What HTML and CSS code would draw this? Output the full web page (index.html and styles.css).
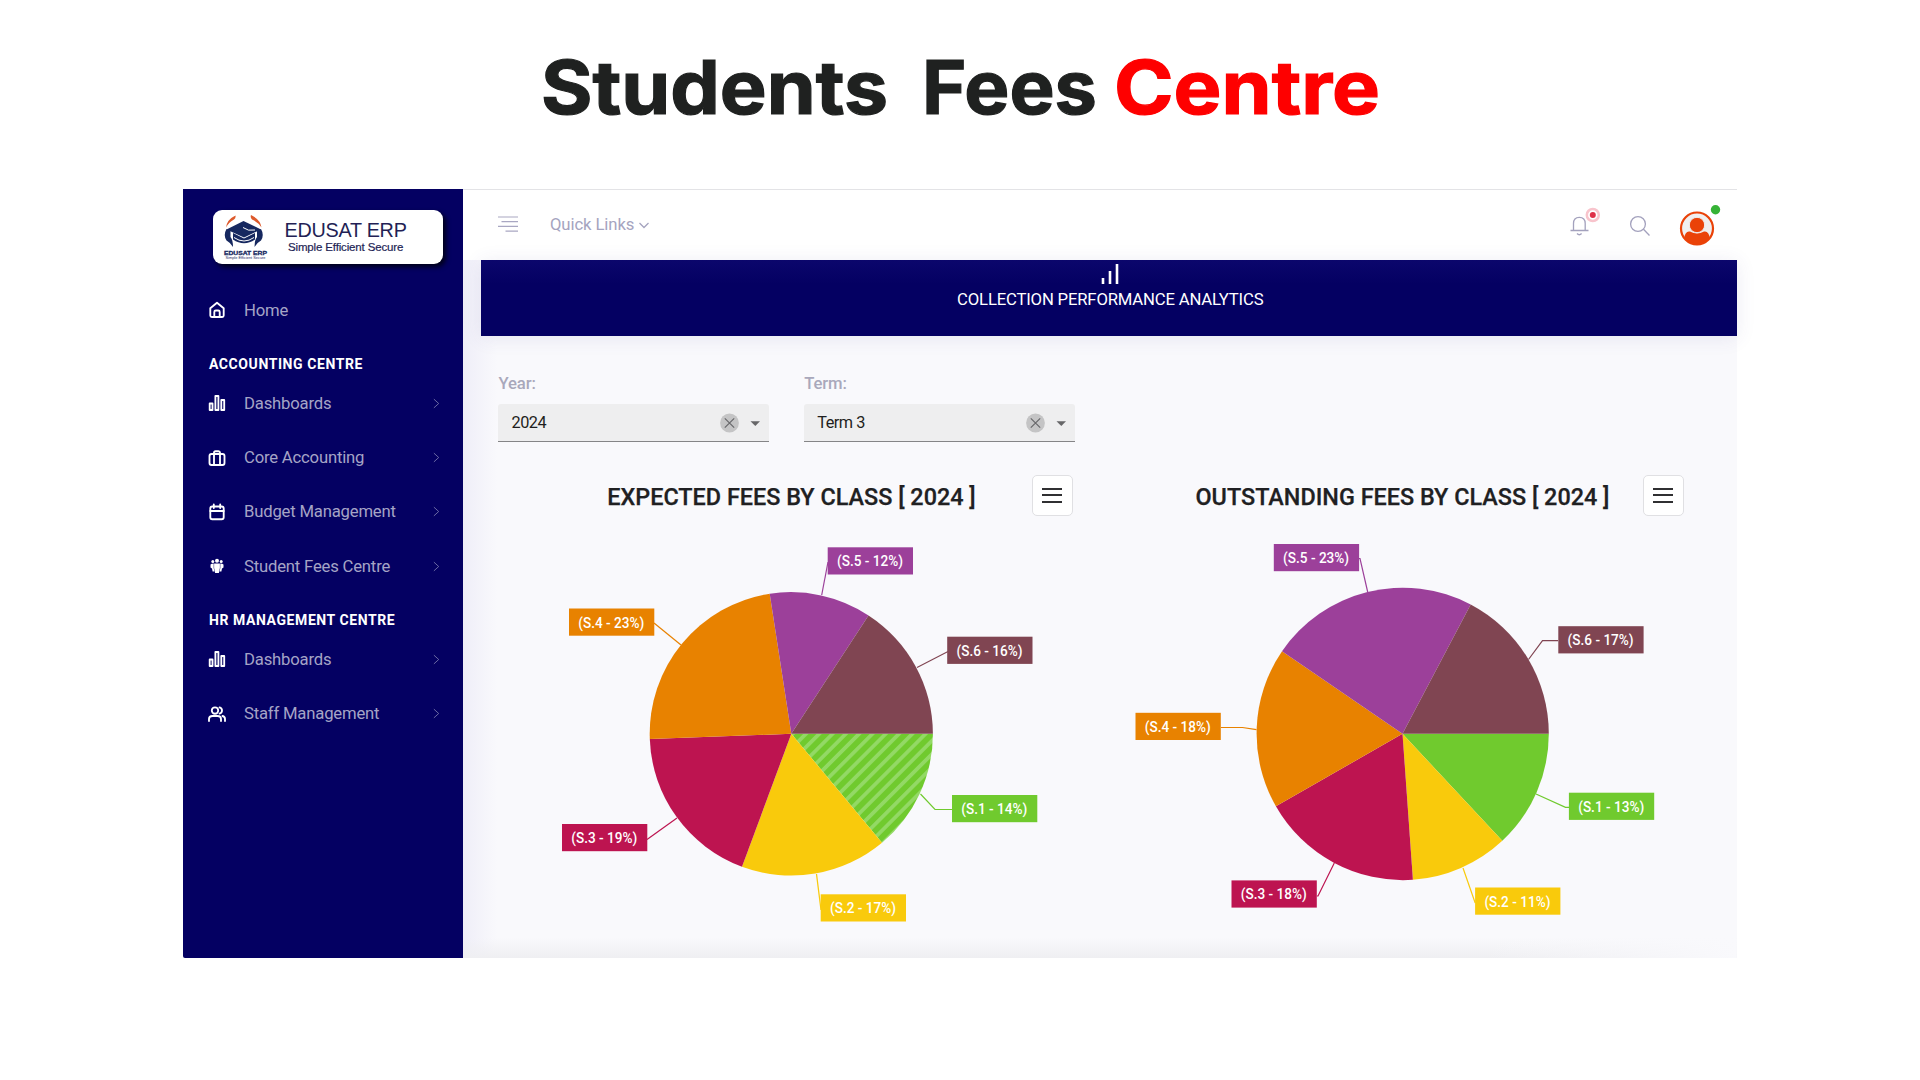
FILE: index.html
```html
<!DOCTYPE html>
<html lang="en">
<head>
<meta charset="utf-8">
<title>Students Fees Centre</title>
<link rel="stylesheet" href="styles.css">
</head>
<body>
<h1 class="headline"><svg width="1920" height="189" viewBox="0 0 1920 189">
  <text x="541" y="114" textLength="347" lengthAdjust="spacingAndGlyphs">Students</text>
  <text x="922" y="114" textLength="175" lengthAdjust="spacingAndGlyphs">Fees</text>
  <text class="red" x="1114" y="114" textLength="266" lengthAdjust="spacingAndGlyphs">Centre</text>
</svg></h1>

<div class="app">
  <aside class="sidebar">
    <div class="brand">
      <svg class="emblem" width="46" height="48" viewBox="0 0 46 48">
        <path d="M3 14.500Q4 6.500 12.500 2.500Q13 5 11 6.500Q6 9 3 14.500ZM38.500 14.500Q37.500 6.500 28 2Q27 4.500 29 6.500Q35 9 38.500 14.500Z" fill="#dd5a2c"/>
        <path d="M20.500 8L38 16.500L21 24.500L3.500 16.500Z" fill="#16285f"/>
        <path d="M10 20L21 25.500L32 20V26.500Q21 34 10 26.500Z" fill="#16285f"/>
        <path d="M20 14.500Q25 18.500 32 17" stroke="#fff" stroke-width="1" fill="none"/>
        <path d="M11 24.500Q21 31.500 31 24.500" stroke="#fff" stroke-width="1" fill="none"/>
        <path d="M3.500 16Q0 22 3.500 27.500Q8 30 10 34Q10 27 7.500 24V17.500ZM38 16Q41.500 22 38 27.500Q33.500 30 31.500 34Q31.500 27 34 24V17.500Z" fill="#16285f"/>
        <text x="1" y="42" class="em-name" textLength="43" lengthAdjust="spacingAndGlyphs">EDUSAT ERP</text>
        <text x="2.500" y="46" class="em-tag" textLength="40" lengthAdjust="spacingAndGlyphs">Simple Efficient Secure</text>
      </svg>
      <div class="brand-text">
        <div class="brand-name">EDUSAT ERP</div>
        <div class="brand-tag">Simple Efficient Secure</div>
      </div>
    </div>
    <nav class="nav">
      <a class="item"><svg class="ico" viewBox="0 0 18 18"><path d="M2.300 7.200L9 1.700L15.700 7.200V14.500Q15.700 16 14.200 16H3.800Q2.300 16 2.300 14.500ZM6.300 16V11Q6.300 9.500 7.800 9.500H10.200Q11.700 9.500 11.700 11V16"/></svg><span>Home</span></a>
      <div class="group">ACCOUNTING CENTRE</div>
      <a class="item"><svg class="ico" viewBox="0 0 18 18"><path d="M1.700 9.500H4.500V16H1.700ZM7.400 2H10.400V16H7.400ZM13.300 6H16.200V16H13.300Z"/></svg><span>Dashboards</span><svg class="chev" viewBox="0 0 8 12"><path d="M1 1L6.500 6L1 11"/></svg></a>
      <a class="item"><svg class="ico" viewBox="0 0 18 18"><rect x="1.500" y="5" width="15" height="11" rx="2"/><path d="M6 16V3.800Q6 2.200 7.500 2.200H10.500Q12 2.200 12 3.800V16"/></svg><span>Core Accounting</span><svg class="chev" viewBox="0 0 8 12"><path d="M1 1L6.500 6L1 11"/></svg></a>
      <a class="item"><svg class="ico" viewBox="0 0 18 18"><rect x="2.300" y="3.500" width="13.400" height="12.700" rx="2"/><path d="M2.300 8H15.700M5.800 1.500V5M12.200 1.500V5"/></svg><span>Budget Management</span><svg class="chev" viewBox="0 0 8 12"><path d="M1 1L6.500 6L1 11"/></svg></a>
      <a class="item"><svg class="ico solid" viewBox="0 0 18 18"><circle cx="9" cy="3.800" r="2"/><circle cx="4.800" cy="4.600" r="1.500"/><circle cx="13.200" cy="4.600" r="1.500"/><path d="M6.100 6.500H11.900V11L10.900 16H7.100L6.100 11ZM5.700 6.500V11L6.400 14.500H4.600L4 11.500L2.500 10.500V7.500Q3.500 6.500 5.700 6.500ZM12.300 6.500V11L11.600 14.500H13.400L14 11.500L15.500 10.500V7.500Q14.500 6.500 12.300 6.500Z"/></svg><span>Student Fees Centre</span><svg class="chev" viewBox="0 0 8 12"><path d="M1 1L6.500 6L1 11"/></svg></a>
      <div class="group">HR MANAGEMENT CENTRE</div>
      <a class="item"><svg class="ico" viewBox="0 0 18 18"><path d="M1.700 9.500H4.500V16H1.700ZM7.400 2H10.400V16H7.400ZM13.300 6H16.200V16H13.300Z"/></svg><span>Dashboards</span><svg class="chev" viewBox="0 0 8 12"><path d="M1 1L6.500 6L1 11"/></svg></a>
      <a class="item"><svg class="ico" viewBox="0 0 18 18"><circle cx="7" cy="5.500" r="3.200"/><path d="M1 16V14Q1 11 4.500 11H9.500Q13 11 13 14V16M11.500 2.400Q14 3 14 5.500Q14 8 11.500 8.600M14.500 11Q17 11.800 17 14V16"/></svg><span>Staff Management</span><svg class="chev" viewBox="0 0 8 12"><path d="M1 1L6.500 6L1 11"/></svg></a>
    </nav>
  </aside>

  <main class="main">
    <header class="topbar">
      <svg class="burger" width="20" height="16" viewBox="0 0 20 16"><path d="M0 1H20M3.500 5.700H20M0 10.400H20M7.500 15.200H20"/></svg>
      <span class="quick">Quick Links</span>
      <svg class="down" width="10" height="7" viewBox="0 0 10 7"><path d="M.5 1L5 5.500L9.500 1"/></svg>
      <svg class="tools" width="166" height="48" viewBox="1559 202 166 48">
        <g class="thin">
          <path d="M1573.500 231.500V224.500Q1573.500 218.300 1579.300 218.300Q1585.200 218.300 1585.200 224.500V231.500M1570.500 231.500H1588.500M1577 234.500Q1579.300 237 1581.600 234.500"/>
          <circle cx="1638" cy="225" r="7.400"/><path d="M1643.500 230.200L1649.500 236.500"/>
        </g>
        <circle cx="1592.800" cy="216" r="6" fill="#fff" stroke="#f8c4cc" stroke-width="2.500"/>
        <circle cx="1592.800" cy="216" r="3" fill="#de3149"/>
        <clipPath id="face"><circle cx="1697" cy="229.500" r="16"/></clipPath>
        <circle cx="1697" cy="229.500" r="16" fill="#f0efef"/>
        <path d="M1684 248V240Q1685 231.500 1690 232.500Q1697 236.500 1704 232.500Q1709 231.500 1710 240V248Z" fill="#ea4208" clip-path="url(#face)"/>
        <circle cx="1697" cy="226" r="7.700" fill="#ea4208" stroke="#f0efef" stroke-width="1"/>
        <circle cx="1697" cy="229.500" r="16" fill="none" stroke="#ea4208" stroke-width="2.200"/>
        <circle cx="1715.500" cy="210.700" r="4.700" fill="#36b336"/>
      </svg>
    </header>
    <div class="content">
      <div class="banner">
        <svg width="18" height="22" viewBox="0 0 18 22"><path d="M2 15V21M9 8V21M16 1V21"/></svg>
        <span>COLLECTION PERFORMANCE ANALYTICS</span>
      </div>
      <div class="filters">
        <div class="field">
          <label>Year:</label>
          <div class="select"><span>2024</span><svg width="32" height="20" viewBox="0 0 32 20"><circle cx="9.500" cy="10" r="9.400"/><path class="x" d="M4.800 5.300L14.200 14.700M14.200 5.300L4.800 14.700"/><path class="tri" d="M30.500 8.200H40L35.300 13Z"/></svg></div>
        </div>
        <div class="field">
          <label>Term:</label>
          <div class="select"><span>Term 3</span><svg width="32" height="20" viewBox="0 0 32 20"><circle cx="9.500" cy="10" r="9.400"/><path class="x" d="M4.800 5.300L14.200 14.700M14.200 5.300L4.800 14.700"/><path class="tri" d="M30.500 8.200H40L35.300 13Z"/></svg></div>
        </div>
      </div>
      <div class="charts">
        <section class="panel">
          <div class="panel-head"><h2>EXPECTED FEES BY CLASS [ 2024 ]</h2><button class="menu"><i></i><i></i><i></i></button></div>
          <svg class="pie" viewBox="486 530 611 428">
            <defs><pattern id="stripes" width="9.400" height="9.400" patternUnits="userSpaceOnUse" patternTransform="rotate(-45 791 734)"><rect width="9.400" height="9.400" fill="#70ca2e"/><rect width="9.400" height="3.700" fill="#93d965"/></pattern></defs>
            <path fill="url(#stripes)" d="M791.300 733.800H932.900A141.600 141.600 0 0 1 882 842.700Z"/>
            <path fill="#f9ca0c" d="M791.300 733.800L882 842.700A141.600 141.600 0 0 1 742 866.700Z"/>
            <path fill="#bd1450" d="M791.300 733.800L742 866.700A141.600 141.600 0 0 1 649.800 739Z"/>
            <path fill="#e88200" d="M791.300 733.800L649.800 739A141.600 141.600 0 0 1 769.700 593.700Z"/>
            <path fill="#9c409a" d="M791.300 733.800L769.700 593.700A141.600 141.600 0 0 1 868.500 615.400Z"/>
            <path fill="#804552" d="M791.300 733.800L868.500 615.400A141.600 141.600 0 0 1 932.900 733.800Z"/>
            <g class="lead">
              <path stroke="#9c409a" d="M821.700 595L828 562"/>
              <path stroke="#804552" d="M917 667.500L948 651.500"/>
              <path stroke="#70ca2e" d="M920.500 794L935 809.500H952"/>
              <path stroke="#f9ca0c" d="M816.500 874L821 910"/>
              <path stroke="#bd1450" d="M677 818L647 839.500"/>
              <path stroke="#e88200" d="M681 645L654 623"/>
            </g>
            <g class="tags">
              <rect x="827.700" y="547.300" width="85.300" height="27.200" fill="#9c409a"/><text x="837" y="566.300" textLength="66" lengthAdjust="spacingAndGlyphs">(S.5 - 12%)</text>
              <rect x="947.200" y="636.700" width="85.300" height="27.200" fill="#804552"/><text x="956.500" y="655.700" textLength="66" lengthAdjust="spacingAndGlyphs">(S.6 - 16%)</text>
              <rect x="952" y="795" width="85.300" height="27.200" fill="#70ca2e"/><text x="961.300" y="814" textLength="66" lengthAdjust="spacingAndGlyphs">(S.1 - 14%)</text>
              <rect x="820.700" y="894.300" width="85.300" height="27.200" fill="#f9ca0c"/><text x="830" y="913.300" textLength="66" lengthAdjust="spacingAndGlyphs">(S.2 - 17%)</text>
              <rect x="562" y="824" width="85.300" height="27.200" fill="#bd1450"/><text x="571.300" y="843" textLength="66" lengthAdjust="spacingAndGlyphs">(S.3 - 19%)</text>
              <rect x="569" y="608.500" width="85.300" height="27.200" fill="#e88200"/><text x="578.300" y="627.500" textLength="66" lengthAdjust="spacingAndGlyphs">(S.4 - 23%)</text>
            </g>
          </svg>
        </section>
        <section class="panel">
          <div class="panel-head"><h2>OUTSTANDING FEES BY CLASS [ 2024 ]</h2><button class="menu"><i></i><i></i><i></i></button></div>
          <svg class="pie" viewBox="1097 530 611 428">
            <path fill="#70ca2e" d="M1402.500 733.800H1548.800A146.300 146.300 0 0 1 1502.300 840.800Z"/>
            <path fill="#f9ca0c" d="M1402.500 733.800L1502.300 840.800A146.300 146.300 0 0 1 1412.900 879.800Z"/>
            <path fill="#bd1450" d="M1402.500 733.800L1412.900 879.800A146.300 146.300 0 0 1 1275.900 806.300Z"/>
            <path fill="#e88200" d="M1402.500 733.800L1275.900 806.300A146.300 146.300 0 0 1 1282 651.300Z"/>
            <path fill="#9c409a" d="M1402.500 733.800L1282 651.300A146.300 146.300 0 0 1 1470.700 604.400Z"/>
            <path fill="#804552" d="M1402.500 733.800L1470.700 604.400A146.300 146.300 0 0 1 1548.800 733.800Z"/>
            <g class="lead">
              <path stroke="#9c409a" d="M1359 558.500H1360L1367.700 592"/>
              <path stroke="#804552" d="M1528.500 659.500L1542.500 640.700H1558"/>
              <path stroke="#70ca2e" d="M1536 794L1565.500 807.300H1569"/>
              <path stroke="#f9ca0c" d="M1463 868L1475.200 903"/>
              <path stroke="#bd1450" d="M1334.300 863L1318 896H1317"/>
              <path stroke="#e88200" d="M1256.500 729.600L1242.500 727.500H1221"/>
            </g>
            <g class="tags">
              <rect x="1273.800" y="544" width="85.300" height="27.200" fill="#9c409a"/><text x="1283.100" y="563" textLength="66" lengthAdjust="spacingAndGlyphs">(S.5 - 23%)</text>
              <rect x="1558.300" y="626.200" width="85.300" height="27.200" fill="#804552"/><text x="1567.600" y="645.200" textLength="66" lengthAdjust="spacingAndGlyphs">(S.6 - 17%)</text>
              <rect x="1568.900" y="792.700" width="85.300" height="27.200" fill="#70ca2e"/><text x="1578.200" y="811.700" textLength="66" lengthAdjust="spacingAndGlyphs">(S.1 - 13%)</text>
              <rect x="1475.100" y="887.500" width="85.300" height="27.200" fill="#f9ca0c"/><text x="1484.400" y="906.500" textLength="66" lengthAdjust="spacingAndGlyphs">(S.2 - 11%)</text>
              <rect x="1231.500" y="880.400" width="85.300" height="27.200" fill="#bd1450"/><text x="1240.800" y="899.400" textLength="66" lengthAdjust="spacingAndGlyphs">(S.3 - 18%)</text>
              <rect x="1135.500" y="712.800" width="85.300" height="27.200" fill="#e88200"/><text x="1144.800" y="731.800" textLength="66" lengthAdjust="spacingAndGlyphs">(S.4 - 18%)</text>
            </g>
          </svg>
        </section>
      </div>
    </div>
  </main>
</div>
</body>
</html>
```
FILE: styles.css
```css
* { box-sizing: border-box; }
body {
  margin: 0;
  width: 1920px;
  height: 1080px;
  overflow: hidden;
  background: #fff;
  font-family: Roboto, "Liberation Sans", sans-serif;
}
.headline { margin: 0; height: 189px; }
.headline svg { display: block; }
.headline text { font: 700 74px Inter, sans-serif; fill: #1f2120; stroke: #1f2120; stroke-width: 1.200; }
.headline .red { fill: #fe0000; stroke: #fe0000; }

.app {
  display: flex;
  width: 1554px;
  height: 769px;
  margin-left: 183px;
}
.sidebar {
  width: 280.400px;
  flex: none;
  background: #040062;
  padding-top: 20.500px;
  border-bottom-left-radius: 2px;
}
.brand {
  display: flex;
  width: 230px;
  height: 54px;
  margin-left: 30px;
  padding-left: 10px;
  background: #fff;
  border-radius: 9px;
  box-shadow: 3px 3px 5px rgba(0, 0, 0, .75);
}
.emblem { margin-top: 3px; }
.em-name { font: 700 5.800px "Liberation Sans", sans-serif; fill: #16285f; stroke: #16285f; stroke-width: .3; }
.em-tag { font: 3.800px "Liberation Sans", sans-serif; fill: #16285f; }
.brand-text {
  font-family: "Liberation Sans", sans-serif;
  color: #231f55;
  padding: 8.500px 0 0 15.500px;
  white-space: nowrap;
}
.brand-name { font-size: 19.800px; line-height: 24px; letter-spacing: -.250px; }
.brand-tag { font-size: 11.500px; line-height: 12px; padding-left: 3.500px; margin-top: -1px; letter-spacing: -.150px; -webkit-text-stroke: .2px #231f55; }

.nav { padding-top: 19.500px; }
.item {
  display: flex;
  align-items: center;
  height: 54.200px;
  padding: 0 23px 0 25px;
  font-size: 16.700px;
  letter-spacing: -.200px;
  color: #a5a4c6;
}
.ico { width: 18px; height: 18px; margin-right: 18px; fill: none; stroke: #fff; stroke-width: 1.850; stroke-linejoin: round; stroke-linecap: round; }
.ico.solid { fill: #fff; stroke: none; }
.chev { width: 7px; height: 11px; margin-left: auto; fill: none; stroke: #7977ad; stroke-width: 1; }
.group {
  height: 39.200px;
  padding: 16px 0 0 26px;
  font-size: 14px;
  line-height: 23px;
  font-weight: 700;
  color: #fff;
  letter-spacing: .580px;
  white-space: nowrap;
}

.main { flex: 1; display: flex; flex-direction: column; min-width: 0; }
.topbar {
  flex: none;
  display: flex;
  align-items: center;
  height: 71px;
  padding: 0 12px 0 34.600px;
  border-top: 1px solid #e3e3e6;
  background: #fff;
}
.burger { fill: none; stroke: #a9a7c2; stroke-width: 1.200; margin-top: -2px; }
.quick { margin-left: 32px; font-size: 16.700px; color: #a5a4bf; letter-spacing: -.100px; margin-top: -1px; }
.down { margin-left: 4.500px; fill: none; stroke: #a5a4bf; stroke-width: 1.300; }
.tools { margin-left: auto; }
.thin { fill: none; stroke: #a3a1bd; stroke-width: 1.300; }

.content {
  flex: 1;
  padding-left: 18.100px;
  background:
    linear-gradient(to right, transparent 80%, #f9f9fc) bottom / 100% 20px no-repeat,
    linear-gradient(to top, #efeff2, rgba(249, 249, 252, 0)) bottom / 100% 20px no-repeat,
    linear-gradient(to right, #efeef8, rgba(249, 249, 252, 0)) left / 34px 100% no-repeat,
    #f9f9fc;
}
.banner {
  display: flex;
  flex-direction: column;
  align-items: center;
  height: 75.700px;
  padding: 3px 0 0 2px;
  background: linear-gradient(#0b066c, #040062 24px);
  box-shadow: 0 2px 18px rgba(70, 60, 150, .1);
  color: #fff;
  font-size: 16.700px;
  line-height: 20px;
}
.banner svg { fill: none; stroke: #fff; stroke-width: 2.600; stroke-linecap: butt; }
.banner span { margin-top: 5px; letter-spacing: -.180px; }

.filters { display: flex; gap: 35.500px; padding: 37px 0 0 17px; }
.field { width: 270.300px; }
.field label { display: block; height: 31px; font-size: 16.700px; line-height: 22px; font-weight: 500; color: #a9a8bb; letter-spacing: -.150px; }
.select {
  display: flex;
  align-items: center;
  justify-content: space-between;
  height: 38px;
  padding: 1px 17px 0 13px;
  background: #eeeeef;
  border-bottom: 1px solid #858587;
  border-radius: 3px 3px 0 0;
  font-size: 16.300px;
  letter-spacing: -.500px;
  color: #1e1e20;
}
.select svg { overflow: visible; fill: #c4c4c5; }
.select .x { stroke: #67676a; stroke-width: 1.200; }
.select .tri { fill: #666668; }

.charts { display: flex; padding-left: 4.500px; }
.panel { width: 611px; }
.panel-head {
  display: grid;
  grid-template-columns: 1fr auto 1fr;
  align-items: center;
  height: 88.300px;
  padding: 19px 24px 0;
}
.panel-head h2 { grid-column: 2; margin: 3px 0 0; font-size: 23.400px; font-weight: 500; color: #202022; white-space: nowrap; -webkit-text-stroke: .25px #202022; }
.menu {
  justify-self: end;
  display: flex;
  flex-direction: column;
  align-items: center;
  justify-content: center;
  gap: 4.300px;
  width: 41px;
  height: 41px;
  padding: 0;
  background: #fff;
  border: 1px solid #e0e0e3;
  border-radius: 5px;
}
.menu i { width: 20px; height: 2.200px; background: #303032; }
.pie { display: block; width: 611px; height: 428px; }
.lead { fill: none; stroke-width: 1.200; }
.tags text { font: 500 14.600px Roboto, sans-serif; fill: #fff; }
```
